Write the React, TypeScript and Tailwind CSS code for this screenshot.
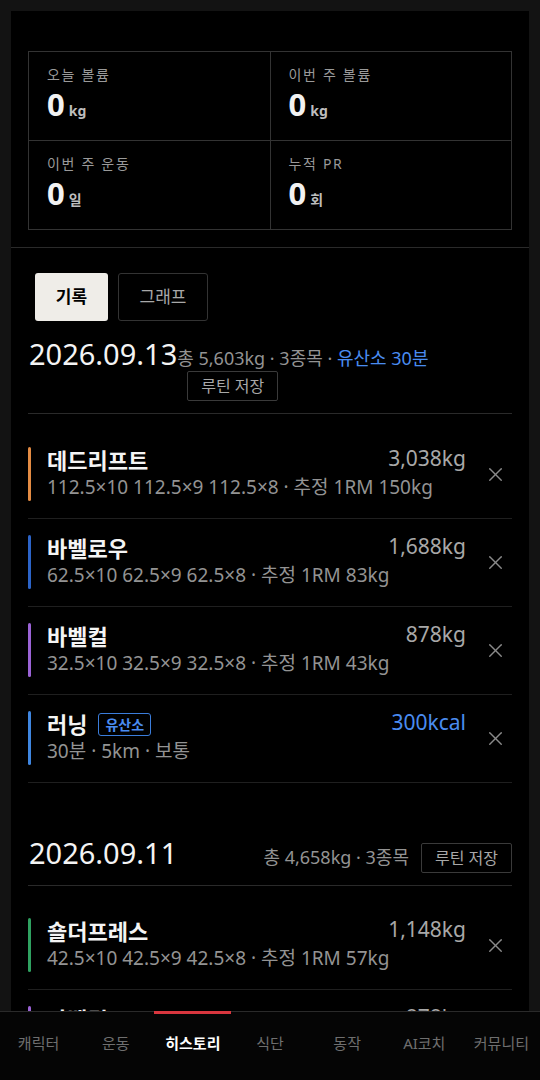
import React from "react";
import { X } from "lucide-react";

type Row = {
  name: string;
  color: string;
  value: string;
  blue?: boolean;
  badge?: string;
  sub: string;
};

const day1: Row[] = [
  { name: "데드리프트", color: "bg-[#e38b43]", value: "3,038kg", sub: "112.5×10 112.5×9 112.5×8 · 추정 1RM 150kg" },
  { name: "바벨로우", color: "bg-[#2c64c8]", value: "1,688kg", sub: "62.5×10 62.5×9 62.5×8 · 추정 1RM 83kg" },
  { name: "바벨컬", color: "bg-[#9b63d6]", value: "878kg", sub: "32.5×10 32.5×9 32.5×8 · 추정 1RM 43kg" },
  { name: "러닝", color: "bg-[#3f86e0]", value: "300kcal", blue: true, badge: "유산소", sub: "30분 · 5km · 보통" },
];

const day2: Row[] = [
  { name: "숄더프레스", color: "bg-[#2fa160]", value: "1,148kg", sub: "42.5×10 42.5×9 42.5×8 · 추정 1RM 57kg" },
  { name: "바벨컬", color: "bg-[#9b63d6]", value: "878kg", sub: "32.5×10 32.5×9 32.5×8 · 추정 1RM 43kg" },
];

function ExerciseRow({ r }: { r: Row }) {
  return (
    <div className="flex items-stretch pt-4 pb-[17px] border-b border-[#1f1f1f]">
      <div className={`w-[3px] rounded-full ${r.color}`} />
      <div className="flex-1 min-w-0 pl-4">
        <div className="flex items-start justify-between">
          <div className="flex items-center gap-[11px]">
            <span className="text-[22px] leading-[27px] font-bold text-[#f4f4f4]">{r.name}</span>
            {r.badge && (
              <span className="text-[14px] leading-[21px] font-bold text-[#4a8cf0] border border-[#3b7ddb] rounded-[3px] px-[6px]">
                {r.badge}
              </span>
            )}
          </div>
          <span className={`text-[21px] leading-[22px] ${r.blue ? "text-[#4a8cf0]" : "text-[#a8a8a8]"}`}>{r.value}</span>
        </div>
        <div className="text-[19px] leading-[27px] text-[#939393] whitespace-nowrap">{r.sub}</div>
      </div>
      <div className="w-[46px] flex items-center justify-end pr-[5px] text-[#8a8a8a]">
        <X size={23} strokeWidth={1.5} />
      </div>
    </div>
  );
}

function Stat({ label, unit }: { label: string; unit: string }) {
  return (
    <div className="h-[89px] pl-[18px] pt-[13px] border-r border-b border-[#333]">
      <div className="text-[14px] leading-5 tracking-[0.12em] text-[#9a9a9a]">{label}</div>
      <div className="flex items-baseline mt-[1px]">
        <span className="text-[31px] leading-9 font-bold text-[#f2f2f2]">0</span>
        <span className="ml-[4px] text-[14px] font-bold text-[#bdbdbd]">{unit}</span>
      </div>
    </div>
  );
}

const navItems = ["캐릭터", "운동", "히스토리", "식단", "동작", "AI코치", "커뮤니티"];

export default function App() {
  return (
    <div
      className="relative w-[540px] h-[1080px] overflow-hidden bg-[#131313]"
      style={{ fontFamily: "'Noto Sans', 'Noto Sans CJK KR', sans-serif" }}
    >
      <div className="mx-[11px] mt-[11px] bg-black min-h-[1069px]">
        <header className="pt-10 pb-[17px] px-[17px] border-b border-[#2a2a2a]">
          <div className="grid grid-cols-2 border-l border-t border-[#333]">
            <Stat label="오늘 볼륨" unit="kg" />
            <Stat label="이번 주 볼륨" unit="kg" />
            <Stat label="이번 주 운동" unit="일" />
            <Stat label="누적 PR" unit="회" />
          </div>
        </header>

        <div className="px-[17px]">
          <div className="flex gap-[10px] pt-[25px] pl-[7px]">
            <button className="w-[73px] h-12 rounded-[3px] bg-[#efede8] text-black font-bold text-[17px]">기록</button>
            <button className="w-[90px] h-12 rounded-[3px] border border-[#333] text-[#a8a8a8] text-[17px]">그래프</button>
          </div>

          <section>
            <div className="flex items-baseline pt-[13px] pb-3 border-b border-[#2a2a2a]">
              <span className="text-[29px] leading-[40px] text-[#f4f4f4] pl-[1px]">2026.09.13</span>
              <div className="flex flex-col items-start">
                <span className="text-[18px] leading-6 text-[#939393]">
                  총 5,603kg · 3종목 · <span className="text-[#4a8cf0]">유산소 30분</span>
                </span>
                <button className="ml-[10px] mt-[1px] border border-[#3a3a3a] rounded-[2px] px-[13px] py-[5px] text-[16px] leading-[18px] text-[#a8a8a8]">
                  루틴 저장
                </button>
              </div>
            </div>
            <div className="mt-[17px]">
              {day1.map((r, i) => (
                <ExerciseRow key={i} r={r} />
              ))}
            </div>
          </section>

          <section className="mt-[50px]">
            <div className="flex items-baseline justify-between pb-3 border-b border-[#2a2a2a]">
              <span className="text-[29px] leading-[40px] text-[#f4f4f4] pl-[1px]">2026.09.11</span>
              <div className="flex items-baseline gap-3">
                <span className="text-[18px] leading-6 text-[#939393]">총 4,658kg · 3종목</span>
                <button className="border border-[#3a3a3a] rounded-[2px] px-[13px] py-[5px] text-[16px] leading-[18px] text-[#a8a8a8]">
                  루틴 저장
                </button>
              </div>
            </div>
            <div className="mt-4">
              {day2.map((r, i) => (
                <ExerciseRow key={i} r={r} />
              ))}
            </div>
          </section>
        </div>
      </div>

      <nav className="absolute left-0 right-0 bottom-0 h-[69px] bg-[#050505] border-t border-[#2a2a2a]">
        <div className="absolute top-[-1px] left-[154px] w-[77px] h-[3px] bg-[#d9363e]" />
        <div className="grid grid-cols-7 pt-[20px]">
          {navItems.map((n) => (
            <div
              key={n}
              className={`text-center text-[15px] leading-[22px] whitespace-nowrap ${
                n === "히스토리" ? "text-white font-bold" : "text-[#6f6f6f]"
              }`}
            >
              {n}
            </div>
          ))}
        </div>
      </nav>
    </div>
  );
}
